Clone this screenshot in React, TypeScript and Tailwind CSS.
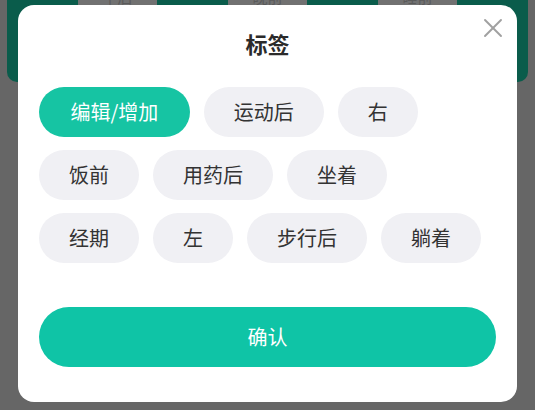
import { X } from 'lucide-react'

const rows = [
  ['编辑/增加', '运动后', '右'],
  ['饭前', '用药后', '坐着'],
  ['经期', '左', '步行后', '躺着'],
]

const backTiles = ['午后', '晚前', '睡前']

export default function App() {
  return (
    <div
      className="relative h-[410px] w-[535px] overflow-hidden bg-[#666666]"
      style={{ fontFamily: '"Noto Sans CJK SC", "Noto Sans", sans-serif' }}
    >
      {/* page behind the dimmed overlay */}
      <div className="px-[7px]">
        <div className="flex h-[82px] gap-[71px] rounded-b-[10px] bg-[#0a5c4b] pl-[71px]">
          {backTiles.map((t) => (
            <div key={t} className="-mt-[16px] flex h-[40px] w-[79px] justify-center bg-[#717171] pt-[2px] text-[15px] text-[#5a5a5a]">
              {t}
            </div>
          ))}
        </div>
      </div>

      {/* dialog */}
      <div className="absolute left-[18px] top-[5px] flex h-[397px] w-[499px] flex-col rounded-[16px] bg-white px-[21px] pt-[23px]">
        <button type="button" className="absolute right-[8px] top-[7px] text-[#a0a0a0]">
          <X size={32} strokeWidth={1.4} />
        </button>
        <h2 className="text-center text-[22px] font-bold leading-[30px] text-[#2b2b2b]">标签</h2>

        <div className="mt-[29px] flex flex-col gap-[13px]">
          {rows.map((row, i) => (
            <div key={i} className="flex gap-[14px]">
              {row.map((tag) => {
                const active = tag === '编辑/增加'
                return (
                  <button
                    key={tag}
                    type="button"
                    className={
                      active
                        ? 'h-[50px] rounded-full bg-[#16c4a3] px-[31.5px] text-[20px] text-white'
                        : 'h-[50px] rounded-full bg-[#f0f0f4] px-[30px] text-[20px] text-[#333]'
                    }
                  >
                    {tag}
                  </button>
                )
              })}
            </div>
          ))}
        </div>

        <button
          type="button"
          className="mt-[44px] h-[60px] w-full rounded-full bg-[#0fc4a6] text-[20px] text-white"
        >
          确认
        </button>
      </div>
    </div>
  )
}
